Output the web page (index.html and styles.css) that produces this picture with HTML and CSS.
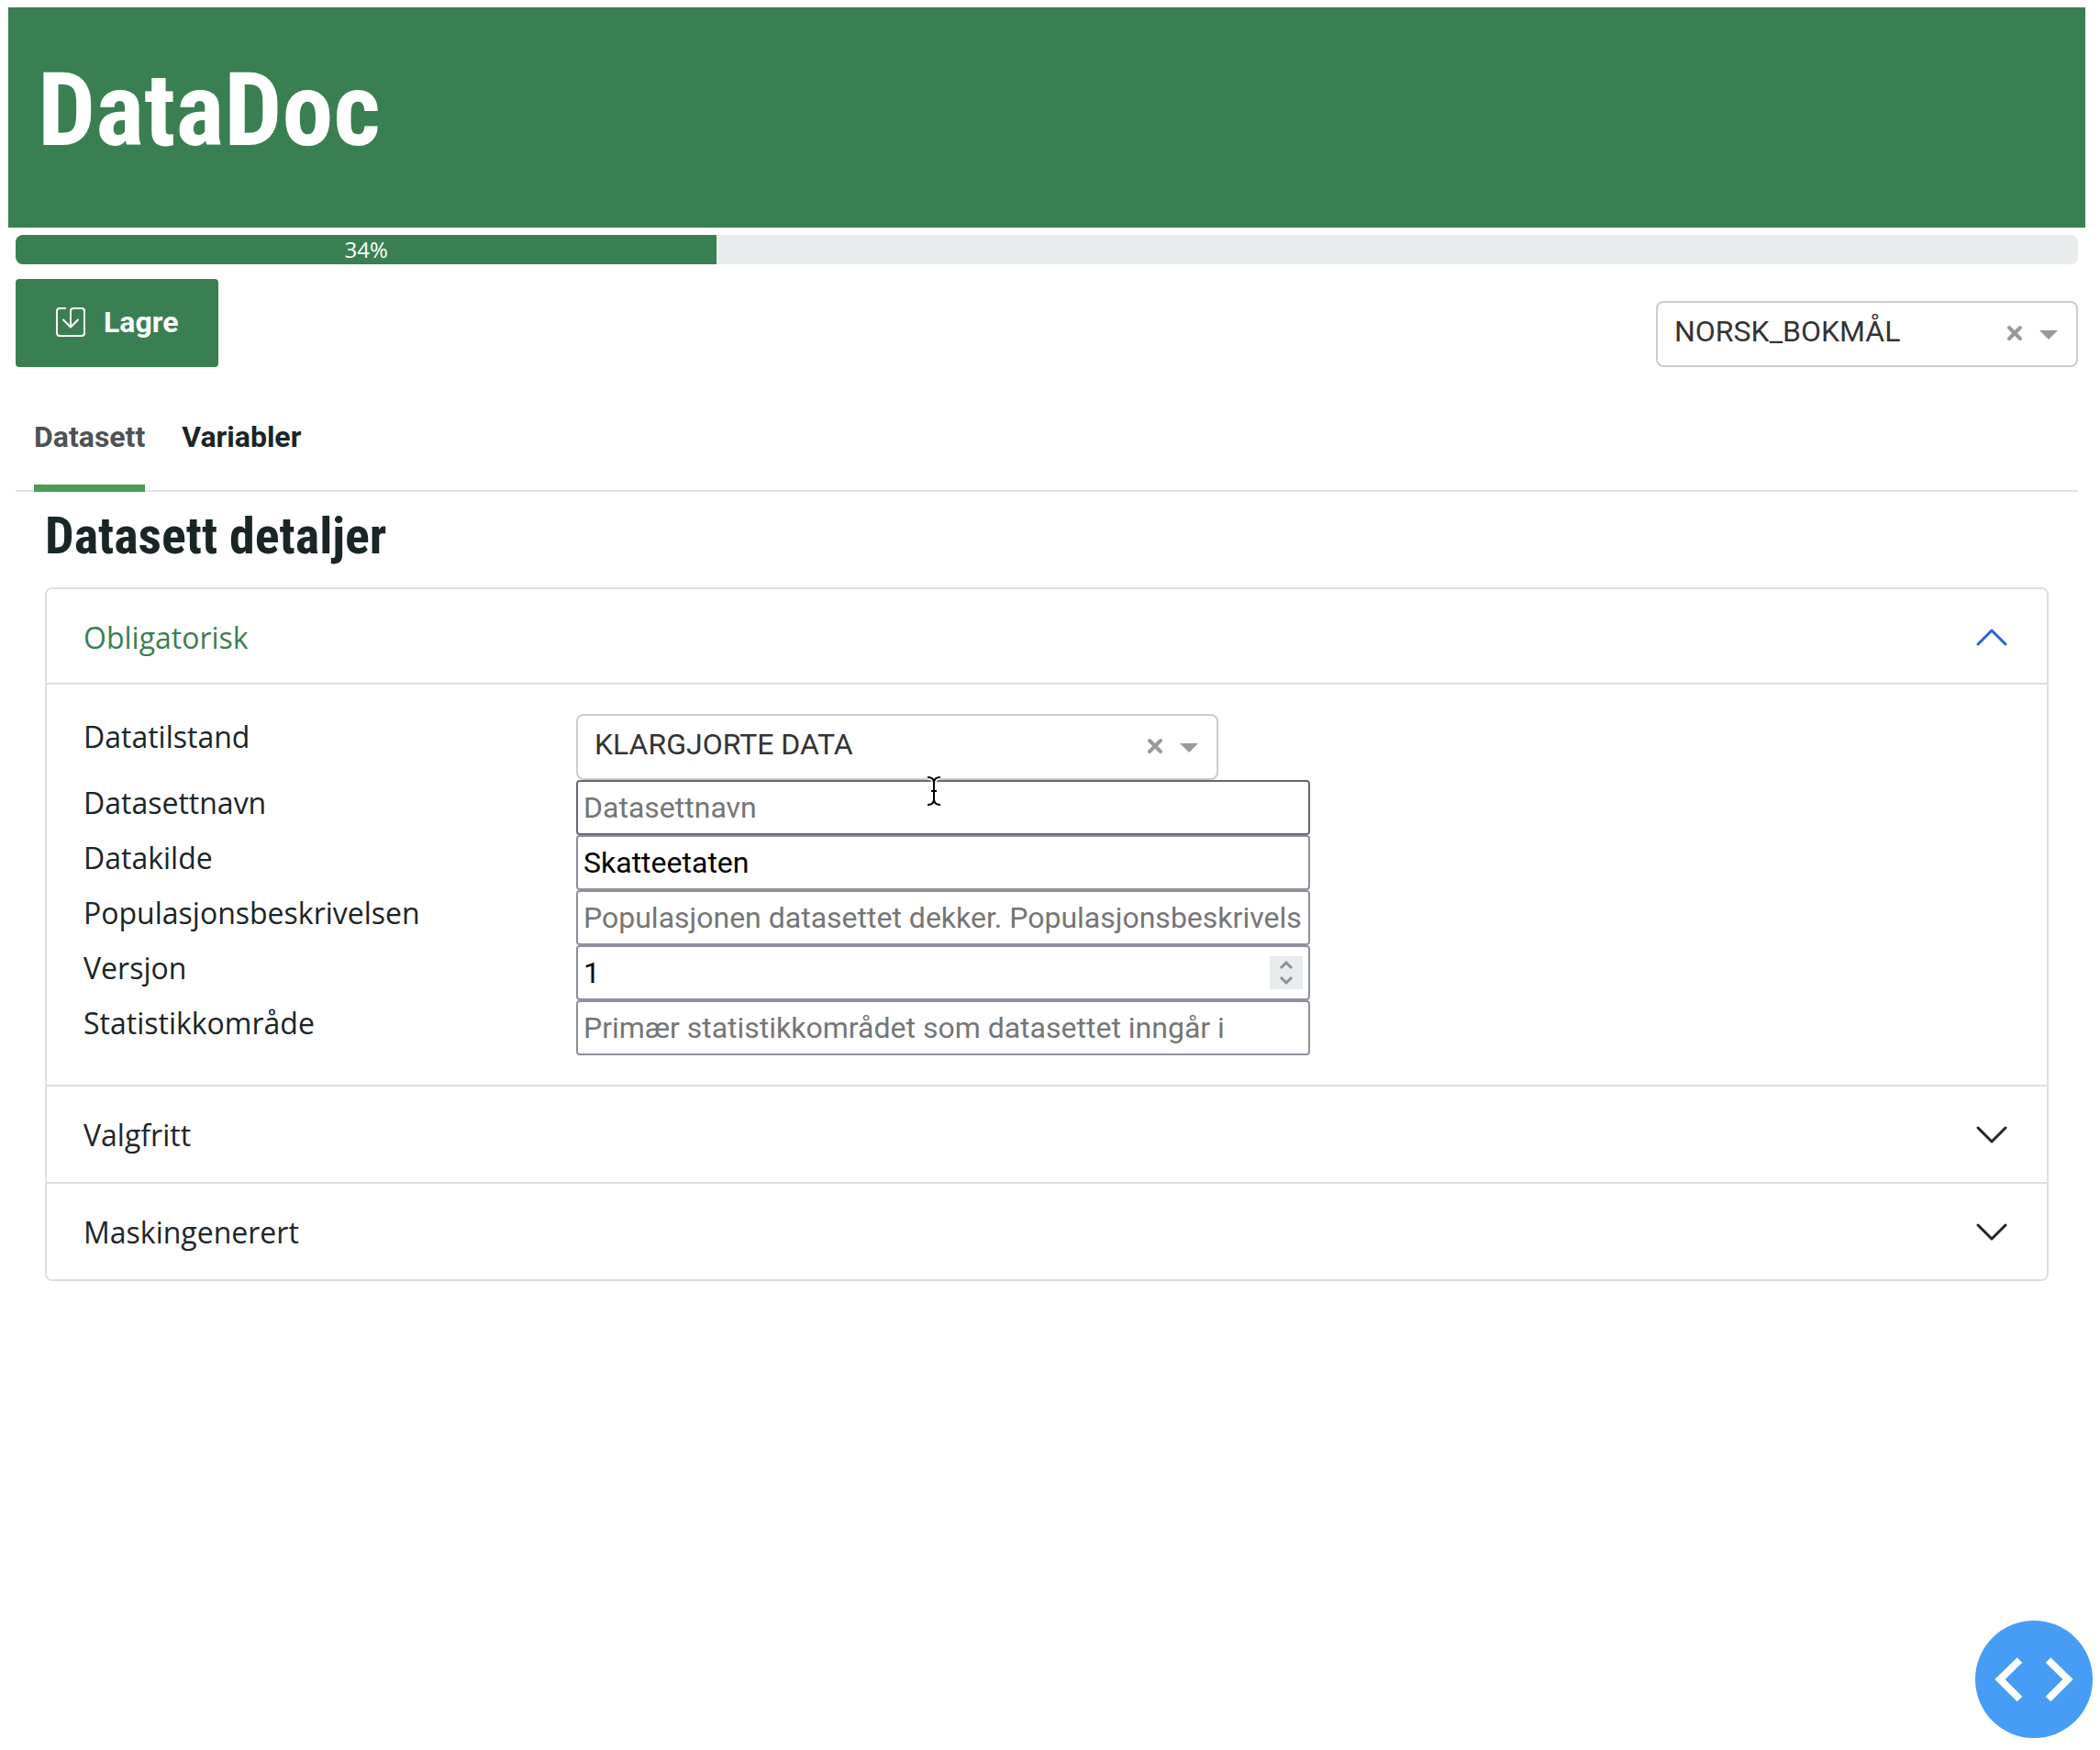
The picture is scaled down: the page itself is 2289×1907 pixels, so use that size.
FILE: index.html
```html
<!DOCTYPE html>
<html lang="nb">
<head>
<meta charset="utf-8">
<title>DataDoc</title>
<link rel="stylesheet" href="styles.css">
</head>
<body>
<header class="banner"><h1 class="banner-title">DataDoc</h1></header>
<main class="content">
  <div class="progress" role="progressbar" aria-valuenow="34" aria-valuemin="0" aria-valuemax="100">
    <div class="progress-bar" style="width: 34%">34%</div>
  </div>
  <div class="toolbar">
    <button class="save" type="button">
      <svg class="save-icon" viewBox="0 0 32 32" aria-hidden="true"><path d="M10 1H4Q1 1 1 4V28Q1 31 4 31H28Q31 31 31 28V4Q31 1 28 1H19Q16 1 16 4V21M8 13.500L16 21.500L24 13.500"/></svg>
      <span>Lagre</span>
    </button>
    <div class="dropdown dropdown-language">
      <select class="dropdown-select" aria-label="Språk"><option>NORSK_BOKMÅL</option></select>
      <button class="dropdown-clear" type="button" aria-label="Fjern språk"><svg viewBox="0 0 18 18"><path d="M3 3L15 15M15 3L3 15"/></svg></button>
      <svg class="dropdown-arrow" viewBox="0 0 20 10" aria-hidden="true"><path d="M0 0H20L10 10Z"/></svg>
    </div>
  </div>
  <nav class="tabs">
    <a class="tab tab-active" href="#datasett">Datasett</a>
    <a class="tab" href="#variabler">Variabler</a>
  </nav>
  <section class="panel" id="datasett">
    <h2 class="panel-title">Datasett detaljer</h2>
    <div class="accordion">
      <div class="accordion-item">
        <button class="accordion-header accordion-open" type="button" aria-expanded="true">Obligatorisk
          <svg class="chevron" viewBox="0 0 40 40" aria-hidden="true"><path d="M5 27L20 12L35 27"/></svg>
        </button>
        <div class="fields">
          <label class="label" for="tilstand">Datatilstand</label>
          <div class="dropdown dropdown-state">
            <select class="dropdown-select" id="tilstand"><option>KLARGJORTE DATA</option></select>
            <button class="dropdown-clear" type="button" aria-label="Fjern datatilstand"><svg viewBox="0 0 18 18"><path d="M3 3L15 15M15 3L3 15"/></svg></button>
            <svg class="dropdown-arrow" viewBox="0 0 20 10" aria-hidden="true"><path d="M0 0H20L10 10Z"/></svg>
          </div>
          <label class="label" for="navn">Datasettnavn</label>
          <div class="field">
            <input class="input input-hovered" id="navn" type="text" placeholder="Datasettnavn">
            <svg class="pointer" viewBox="0 0 18 36" aria-hidden="true"><path class="pointer-halo" d="M2 3Q9 3 9 9Q9 3 16 3M9 8V28M6 18H12M2 33Q9 33 9 27Q9 33 16 33"/><path d="M2 3Q9 3 9 9Q9 3 16 3M9 8V28M6 18H12M2 33Q9 33 9 27Q9 33 16 33"/></svg>
          </div>
          <label class="label" for="kilde">Datakilde</label>
          <div class="field"><input class="input" id="kilde" type="text" value="Skatteetaten"></div>
          <label class="label" for="populasjon">Populasjonsbeskrivelsen</label>
          <div class="field"><input class="input" id="populasjon" type="text" placeholder="Populasjonen datasettet dekker. Populasjonsbeskrivelsen"></div>
          <label class="label" for="versjon">Versjon</label>
          <div class="field">
            <input class="input" id="versjon" type="number" value="1">
            <svg class="spinner" viewBox="0 0 36 36" aria-hidden="true"><path d="M12 13L18 7L24 13M12 23L18 29L24 23"/></svg>
          </div>
          <label class="label" for="omrade">Statistikkområde</label>
          <div class="field"><input class="input" id="omrade" type="text" placeholder="Primær statistikkområdet som datasettet inngår i"></div>
        </div>
      </div>
      <div class="accordion-item">
        <button class="accordion-header" type="button" aria-expanded="false">Valgfritt
          <svg class="chevron" viewBox="0 0 40 40" aria-hidden="true"><path d="M5 12L20 27L35 12"/></svg>
        </button>
      </div>
      <div class="accordion-item">
        <button class="accordion-header" type="button" aria-expanded="false">Maskingenerert
          <svg class="chevron" viewBox="0 0 40 40" aria-hidden="true"><path d="M5 12L20 27L35 12"/></svg>
        </button>
      </div>
    </div>
  </section>
</main>
<button class="debug" type="button" aria-label="Utviklerverktøy">
  <svg viewBox="0 0 128 128" aria-hidden="true"><path d="M48.500 43L27 64L48.500 85.500M79.500 43L101 64L79.500 85.500"/></svg>
</button>
</body>
</html>
```
FILE: styles.css
```css
* { box-sizing: border-box; }

body {
  margin: 0;
  padding: 8px 16px 8px 9px;
  background: #fff;
  color: #1a2526;
  font-family: "Open Sans", sans-serif;
  font-size: 32px;
  line-height: 50px;
}

button, input, select { font: inherit; color: inherit; }
button { cursor: pointer; }
svg { display: block; fill: none; }

.banner {
  height: 240px;
  padding: 44px 32px;
  background: #3a7f52;
}

.banner-title {
  margin: 0;
  color: #fff;
  font: bold 112px/136px "Roboto Condensed", Roboto, sans-serif;
}

.content { padding: 8px 8px 0; }

.progress {
  height: 32px;
  overflow: hidden;
  border-radius: 8px;
  background: #e8ecec;
}

.progress-bar {
  background: #3a7f52;
  color: #fff;
  font-size: 24px;
  line-height: 32px;
  text-align: center;
}

.toolbar {
  display: flex;
  justify-content: space-between;
  align-items: flex-end;
  margin-top: 16px;
}

.save {
  display: flex;
  align-items: center;
  gap: 20px;
  height: 96px;
  padding: 0 44px 2px;
  border: 0;
  border-radius: 4px;
  background: #3a7f52;
  color: #fff;
  font-family: Roboto, sans-serif;
  font-weight: bold;
}

.save-icon {
  width: 32px;
  height: 32px;
  stroke: #fff;
  stroke-width: 2;
  stroke-linecap: round;
  stroke-linejoin: round;
}

.dropdown { position: relative; height: 72px; }
.dropdown-language { width: 460px; }
.dropdown-state { max-width: 700px; }

.dropdown-select {
  width: 100%;
  height: 100%;
  padding: 0 100px 6px 18px;
  border: 2px solid #ccc;
  border-radius: 8px;
  background: #fff;
  color: #333;
  font-family: Roboto, sans-serif;
  appearance: none;
}

.dropdown-clear {
  position: absolute;
  top: 26px;
  right: 60px;
  width: 18px;
  height: 18px;
  padding: 0;
  border: 0;
  background: none;
  stroke: #999;
  stroke-width: 4;
  stroke-linecap: round;
}

.dropdown-arrow {
  position: absolute;
  top: 32px;
  right: 22px;
  width: 20px;
  height: 10px;
  fill: #999;
}

.tabs {
  display: flex;
  gap: 40px;
  margin-top: 48px;
  padding: 0 20px;
  border-bottom: 2px solid #dfe3e6;
}

.tab {
  height: 88px;
  margin-bottom: -2px;
  padding-top: 3px;
  border-bottom: 8px solid transparent;
  color: #1a2526;
  font-family: Roboto, sans-serif;
  font-weight: bold;
  text-decoration: none;
}

.tab-active { border-color: #4b9b54; color: #4b5356; }

.panel { padding: 14px 32px 0; }

.panel-title {
  margin: 0 0 22px;
  font: bold 56px/68px "Roboto Condensed", Roboto, sans-serif;
}

.accordion {
  overflow: hidden;
  border: 2px solid #dedede;
  border-radius: 8px;
}

.accordion-item + .accordion-item { border-top: 2px solid #dedede; }

.accordion-header {
  display: flex;
  justify-content: space-between;
  align-items: center;
  width: 100%;
  height: 104px;
  padding: 2px 40px 0;
  border: 0;
  background: #fff;
  color: #212529;
  stroke: #212529;
  text-align: left;
}

.accordion-open {
  padding-top: 4px;
  border-bottom: 2px solid #dedede;
  color: #3a7f52;
  stroke: #2b64d0;
}

.chevron {
  width: 40px;
  height: 40px;
  stroke-width: 3;
  stroke-linecap: round;
  stroke-linejoin: round;
}

.fields {
  display: grid;
  grid-template-columns: 1fr 3fr;
  column-gap: 16px;
  padding: 32px 40px;
}

.field { position: relative; max-width: 800px; height: 60px; }

.input {
  display: block;
  width: 100%;
  height: 100%;
  padding: 2px 6px;
  border: 2px solid #8f8f9d;
  border-radius: 4px;
  background: #fff;
  color: #000;
  font-family: Roboto, sans-serif;
  appearance: textfield;
}

.input-hovered { border-color: #676774; }
.input::placeholder { color: #757575; opacity: 1; }
.input::-webkit-inner-spin-button { appearance: none; margin: 0; }

.spinner {
  position: absolute;
  top: 12px;
  right: 8px;
  width: 36px;
  height: 36px;
  background: #e8ecec;
  stroke: #8f8f9d;
  stroke-width: 3;
}

.pointer {
  position: absolute;
  top: -6px;
  left: 381px;
  width: 18px;
  height: 36px;
  stroke: #000;
  stroke-width: 2;
}

.pointer-halo { stroke: #fff; stroke-width: 5; }

.debug {
  position: fixed;
  right: 8px;
  bottom: 13px;
  width: 128px;
  height: 128px;
  padding: 0;
  border: 0;
  border-radius: 50%;
  background: #479cf5;
  stroke: #fff;
  stroke-width: 8;
}
```
